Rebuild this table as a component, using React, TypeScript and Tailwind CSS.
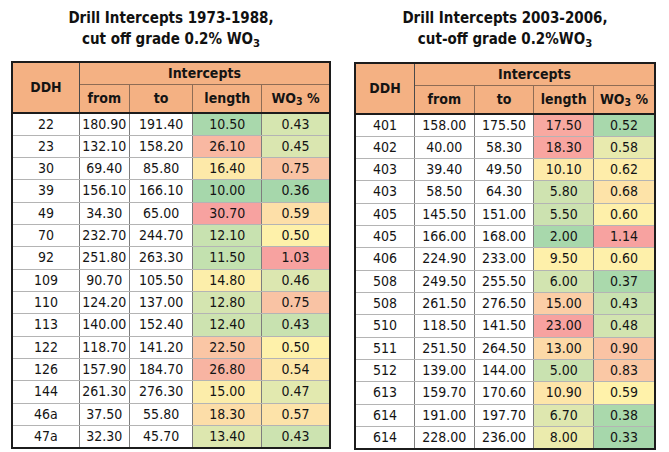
type Row = [string, string, string, string, string, string, string];

const leftRows: Row[] = [
  ["22", "180.90", "191.40", "10.50", "#a9d8ac", "0.43", "#d6e6b0"],
  ["23", "132.10", "158.20", "26.10", "#f9b8a2", "0.45", "#dae6b0"],
  ["30", "69.40", "85.80", "16.40", "#fde9a9", "0.75", "#f9c3a4"],
  ["39", "156.10", "166.10", "10.00", "#a6d7ab", "0.36", "#a6d7ab"],
  ["49", "34.30", "65.00", "30.70", "#f7a2a0", "0.59", "#fddfa8"],
  ["70", "232.70", "244.70", "12.10", "#c8e2b0", "0.50", "#fef1aa"],
  ["92", "251.80", "263.30", "11.50", "#c3e1af", "1.03", "#f7a2a0"],
  ["109", "90.70", "105.50", "14.80", "#fceeaa", "0.46", "#dce7b0"],
  ["110", "124.20", "137.00", "12.80", "#d4e5b0", "0.75", "#f9c3a4"],
  ["113", "140.00", "152.40", "12.40", "#cde3b0", "0.43", "#c8e2b0"],
  ["122", "118.70", "141.20", "22.50", "#fac6a5", "0.50", "#fef1aa"],
  ["126", "157.90", "184.70", "26.80", "#f8b4a2", "0.54", "#fde7a9"],
  ["144", "261.30", "276.30", "15.00", "#fcedaa", "0.47", "#e2e9af"],
  ["46a", "37.50", "55.80", "18.30", "#fcdda8", "0.57", "#fde3a9"],
  ["47a", "32.30", "45.70", "13.40", "#dde7af", "0.43", "#cce3b0"],
];

const rightRows: Row[] = [
  ["401", "158.00", "175.50", "17.50", "#f8a9a1", "0.52", "#a8d8ac"],
  ["402", "40.00", "58.30", "18.30", "#f8a5a0", "0.58", "#e8eaae"],
  ["403", "39.40", "49.50", "10.10", "#fdeaa9", "0.62", "#feedaa"],
  ["403", "58.50", "64.30", "5.80", "#cfe3b0", "0.68", "#fde3a8"],
  ["405", "145.50", "151.00", "5.50", "#cce2b0", "0.60", "#fef0aa"],
  ["405", "166.00", "168.00", "2.00", "#a8d8ac", "1.14", "#f7a2a0"],
  ["406", "224.90", "233.00", "9.50", "#fef0aa", "0.60", "#fef0aa"],
  ["508", "249.50", "255.50", "6.00", "#d2e4b0", "0.37", "#aad9ac"],
  ["508", "261.50", "276.50", "15.00", "#fbcea6", "0.43", "#c9e2b0"],
  ["510", "118.50", "141.50", "23.00", "#f7a2a0", "0.48", "#d2e4b0"],
  ["511", "251.50", "264.50", "13.00", "#fcd9a7", "0.90", "#fac3a4"],
  ["512", "139.00", "144.00", "5.00", "#c9e2b0", "0.83", "#fac8a5"],
  ["613", "159.70", "170.60", "10.90", "#fde5a9", "0.59", "#fff2aa"],
  ["614", "191.00", "197.70", "6.70", "#dee7af", "0.38", "#aad9ac"],
  ["614", "228.00", "236.00", "8.00", "#ebebad", "0.33", "#a6d7ab"],
];

function IntTable({ rows, cols }: { rows: Row[]; cols: string[] }) {
  const td = "h-[22.35px] p-0 text-center border-r border-b border-r-[#7e7e7e] border-b-[#b4b4b4]";
  return (
    <table className="table-fixed border-collapse border-2 border-[#1c1c1c] text-[14px] text-[#141414]">
      <colgroup>
        {cols.map((c, i) => (
          <col key={i} className={c} />
        ))}
      </colgroup>
      <thead>
        <tr className="h-[22px]">
          <th rowSpan={2} className="bg-[#f4b183] p-0 font-bold border-r border-[#4a4a4a] border-b-2 border-b-[#1c1c1c]">
            DDH
          </th>
          <th colSpan={4} className="bg-[#f4b183] p-0 font-bold border-b border-[#8e6c55]">
            Intercepts
          </th>
        </tr>
        <tr className="h-[28px]">
          {["from", "to", "length"].map((h) => (
            <th key={h} className="bg-[#f4b183] p-0 font-bold border-r border-r-[#8e6c55] border-b-2 border-b-[#1c1c1c]">
              {h}
            </th>
          ))}
          <th className="bg-[#f4b183] p-0 font-bold border-b-2 border-b-[#1c1c1c]">
            WO<sub>3</sub> %
          </th>
        </tr>
      </thead>
      <tbody>
        {rows.map((r, i) => (
          <tr key={i}>
            <td className={`${td} bg-white`}>{r[0]}</td>
            <td className={`${td} bg-white`}>{r[1]}</td>
            <td className={`${td} bg-white`}>{r[2]}</td>
            <td className={td} style={{ backgroundColor: r[4] }}>
              {r[3]}
            </td>
            <td className={td} style={{ backgroundColor: r[6] }}>
              {r[5]}
            </td>
          </tr>
        ))}
      </tbody>
    </table>
  );
}

export default function App() {
  return (
    <div
      className="w-[669px] h-[452px] bg-white flex items-start pl-[11px] gap-[23px] overflow-hidden"
      style={{ fontFamily: '"DejaVu Sans Condensed", "DejaVu Sans", sans-serif' }}
    >
      <div className="w-[320px] flex flex-col">
        <div className="h-[61px] pt-[8px] text-center font-bold text-[15px] leading-[21px] text-[#111]">
          <div>Drill Intercepts 1973-1988,</div>
          <div>
            cut off grade 0.2% WO<sub>3</sub>
          </div>
        </div>
        <IntTable rows={leftRows} cols={["w-[68px]", "w-[50px]", "w-[64px]", "w-[69px]", "w-[69px]"]} />
      </div>
      <div className="w-[302px] flex flex-col">
        <div className="h-[62px] pt-[8px] text-center font-bold text-[15px] leading-[21px] text-[#111]">
          <div>Drill Intercepts 2003-2006,</div>
          <div>
            cut-off grade 0.2%WO<sub>3</sub>
          </div>
        </div>
        <IntTable rows={rightRows} cols={["w-[60px]", "w-[60px]", "w-[60px]", "w-[60px]", "w-[62px]"]} />
      </div>
    </div>
  );
}
